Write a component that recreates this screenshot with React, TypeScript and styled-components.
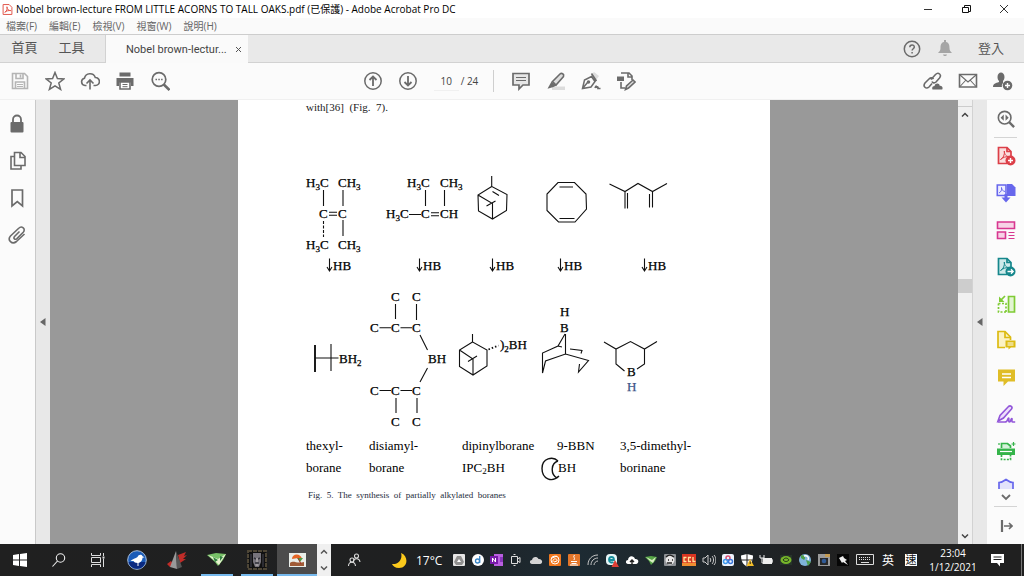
import React from 'react';
import styled, { createGlobalStyle } from 'styled-components';

const UI = `"Open Sans", "Noto Sans CJK TC", sans-serif`;
const SERIF = `"Liberation Serif", "Times New Roman", serif`;
const INK = '#6b6b6b';

const Global = createGlobalStyle`
  * { box-sizing: border-box; }
  body { margin: 0; font-family: ${UI}; }
  button, input { font: inherit; color: inherit; }
`;

/* ---------- window frame ---------- */

const Window = styled.div`
  display: flex;
  flex-direction: column;
  height: 100vh;
  overflow: hidden;
  background: #fafafa;
`;

const BareButton = styled.button`
  display: flex;
  align-items: center;
  justify-content: center;
  padding: 0;
  border: 0;
  background: transparent;
`;

const TitleBar = styled.header`
  display: flex;
  align-items: center;
  height: 18px;
  padding: 0 1px 0 2px;
  background: #fff;
`;

const Title = styled.h1`
  flex: 1;
  margin: 0 0 0 3px;
  font-size: 10px;
  font-weight: 400;
  line-height: 18px;
  color: #000;
  white-space: nowrap;
`;

const WindowButton = styled(BareButton)`
  width: 38px;
  height: 18px;
`;

const MenuBar = styled.nav`
  display: flex;
  gap: 12px;
  height: 16px;
  padding: 0 6px;
`;

const MenuButton = styled(BareButton)`
  height: 16px;
  font-size: 10px;
  line-height: 16px;
  color: #666;
`;

const TabBar = styled.div`
  display: flex;
  height: 29px;
  border-top: 1px solid #cdcdcd;
  background: #e9e9e9;
  box-shadow: inset 0 -1px 0 #d2d2d2;
`;

const NavTab = styled(BareButton)`
  width: 47px;
  font-size: 13px;
  color: #555;
`;

const NavTabs = styled.div`
  display: flex;
  width: 106px;
  padding-bottom: 5px;
  padding-left: 1px;
  border-right: 1px solid #d2d2d2;
`;

const FileTab = styled.div`
  display: flex;
  align-items: center;
  gap: 9px;
  padding: 0 7px 0 20px;
  background: #fafafa;
  font-family: Roboto, "Noto Sans CJK TC", sans-serif;
  font-size: 11px;
  color: #444;
  white-space: nowrap;
`;

const TabActions = styled.div`
  display: flex;
  align-items: center;
  margin-left: auto;
  padding-right: 20px;
  padding-bottom: 1px;
`;

const TabAction = styled(BareButton)`
  width: 33px;
  height: 27px;
`;

const SignIn = styled(BareButton)`
  height: 24px;
  margin-left: 16px;
  padding-bottom: 3px;
  font-size: 13px;
  color: #555;
`;

const Toolbar = styled.div`
  display: grid;
  grid-template-columns: 1fr auto 1fr;
  align-items: center;
  height: 37px;
  padding: 0 4px 0 2px;
  border-bottom: 1px solid #f0f0f0;
  background: #fbfbfb;
`;

const ToolGroup = styled.div<{ $end?: boolean; $mid?: boolean }>`
  display: flex;
  align-items: center;
  justify-content: ${(p) => (p.$end ? 'flex-end' : 'flex-start')};
  padding-right: ${(p) => (p.$mid ? '23px' : '0')};
`;

const ToolButton = styled(BareButton)`
  width: 35px;
  height: 34px;
`;

const PageField = styled.label`
  display: flex;
  align-items: center;
  padding: 0 15px 0 8px;
  font-size: 10px;
  color: #444;
  white-space: pre;
`;

const PageInput = styled.input`
  width: 25px;
  height: 20px;
  margin-right: 2px;
  padding: 0;
  border: 0;
  border-bottom: 1px solid #f0f0f0;
  background: transparent;
  text-align: center;
`;

const ToolDivider = styled.div`
  width: 1px;
  height: 22px;
  margin-right: 9px;
  background: #cfcfcf;
`;

/* ---------- work area ---------- */

const Work = styled.div`
  display: flex;
  flex: 1;
  min-height: 0;
`;

const LeftRail = styled.aside`
  width: 36px;
  padding-top: 5px;
  border-right: 1px solid #c9c9c9;
  background: #fbfbfb;
`;

const RailButton = styled(BareButton)`
  width: 34px;
  height: 37px;
`;

const Collapser = styled(BareButton)<{ $right?: boolean }>`
  width: ${(p) => (p.$right ? '15px' : '14px')};
  background: #e8e8e8;
  border-left: ${(p) => (p.$right ? '1px solid #d2d2d2' : '0')};
`;

const Canvas = styled.main`
  display: flex;
  flex: 1;
  justify-content: center;
  min-width: 0;
  overflow: hidden;
  background: #999;
`;

const Sheet = styled.article`
  flex: none;
  width: 532px;
  background: #fff;
  font-family: ${SERIF};
  color: #000;
`;

const BodyLine = styled.p`
  margin: 0 0 56px 68px;
  font-size: 11px;
  line-height: 14px;
  color: #222;
  white-space: pre;
`;

const Figure = styled.figure`
  margin: 0;

  > svg {
    display: block;
    width: 100%;
  }
`;

const Names = styled.div`
  display: grid;
  grid-template-columns: 63px 93px 95px 63px 1fr;
  margin-left: 68px;
  font-size: 13px;
  line-height: 22px;
  white-space: nowrap;
`;

const Name = styled.span`
  display: flex;
  height: 22px;

  svg {
    flex: none;
    margin-right: -2px;
    margin-left: -16px;
  }

  small {
    font-size: 9px;
    line-height: 28px;
  }
`;

const Caption = styled.figcaption`
  margin: 9px 0 0 70px;
  font-size: 9px;
  line-height: 14px;
  color: #222a3a;
  white-space: pre;
`;

const ScrollBar = styled.div`
  display: flex;
  flex-direction: column;
  align-items: center;
  width: 14px;
  padding-top: 6px;
  background: #f0f0f0;
`;

const ScrollButton = styled(BareButton)<{ $lined?: boolean }>`
  width: 14px;
  height: 16px;
  border-top: ${(p) => (p.$lined ? '1px solid #ccc' : '0')};
`;

const ScrollTrack = styled.div`
  display: grid;
  flex: 1;
  width: 14px;
  grid-template-rows: 157fr 14px 236fr;
`;

const ScrollThumb = styled.div`
  grid-row: 2;
  background: #cdcdcd;
`;

const RightRail = styled.aside`
  display: flex;
  flex-direction: column;
  align-items: center;
  width: 37px;
  background: #fbfbfb;
`;

const RailDivider = styled.div`
  width: 23px;
  height: 1px;
  flex: none;
  background: #d4d4d4;
`;

const ToolList = styled.div`
  display: flex;
  flex: 1;
  flex-direction: column;
  min-height: 0;
`;

const ToolSlot = styled(BareButton)`
  flex: 1;
  width: 37px;
  min-height: 0;
`;

const RailFoot = styled(BareButton)<{ $h: number; $low?: boolean }>`
  flex: none;
  align-items: ${(p) => (p.$low ? 'flex-end' : 'center')};
  width: 37px;
  height: ${(p) => p.$h}px;
`;

/* ---------- taskbar ---------- */

const TaskBar = styled.footer`
  display: flex;
  height: 32px;
  background: linear-gradient(90deg, #202020, #1f2021 40%, #1d2b33 56%, #1e262b 68%, #202020 82%);
  color: #fff;
`;

const TaskButton = styled(BareButton)<{ $app?: boolean; $active?: boolean }>`
  width: ${(p) => (p.$app ? '40px' : '39px')};
  height: 32px;
  flex: none;
  background: ${(p) => (p.$active ? '#4c4c4c' : 'transparent')};
  box-shadow: ${(p) => (p.$active ? 'inset 0 -2px 0 #76b9ed' : 'none')};
`;

const Running = styled.span`
  display: flex;
  align-items: center;
  justify-content: center;
  width: 32px;
  height: 32px;
  border-top: 2px solid transparent;
  border-bottom: 2px solid #76b9ed;
`;

const BandScroll = styled.div`
  display: flex;
  flex-direction: column;
  width: 14px;
  background: #f0f0f0;
`;

const BandButton = styled(BareButton)`
  flex: 1;
`;

const Weather = styled(BareButton)`
  justify-content: flex-start;
  gap: 9px;
  width: 72px;
  padding-left: 15px;
  font-size: 12px;
`;

const Tray = styled.div`
  display: flex;
  flex: 1;
  min-width: 0;
`;

const TrayButton = styled(BareButton)<{ $w?: number }>`
  flex: ${(p) => (p.$w ? 'none' : '1')};
  width: ${(p) => (p.$w ? `${p.$w}px` : 'auto')};
  min-width: 0;
  font-size: 12px;
`;

const InputMethod = styled.span`
  width: 12px;
  height: 12px;
  background: #fff;
  color: #111;
  font-size: 11px;
  line-height: 12px;
`;

const Clock = styled(BareButton)`
  flex-direction: column;
  width: 60px;
  font-size: 10px;
  line-height: 14px;
`;

const ShowDesktop = styled.div`
  width: 3px;
  margin-left: 10px;
  border-left: 1px solid #777;
`;

/* ---------- drawing helpers ---------- */

type IconProps = { s?: number; box?: number; w?: number; c?: string; children: React.ReactNode };
const Icon = ({ s = 20, box = 20, w = 2, c = INK, children }: IconProps) => (
  <svg width={s} height={s} viewBox={`0 0 ${box} ${box}`} fill="none" stroke={c} strokeWidth={w} aria-hidden="true">
    {children}
  </svg>
);

const Pdf = () => <path d="M4.500 13.500c3-1.500 4.300-5 3.800-8.500.2 4 2.200 5.500 5 5.700-3.500-.5-6.300.8-8.800 2.800z" strokeWidth="1" />;

const SideTriangle = () => (
  <svg width="6" height="8" viewBox="0 0 6 8" aria-hidden="true"><path d="M5.500 0v8L0 4z" fill="#666" /></svg>
);

const Chevron = ({ up, c = '#444' }: { up?: boolean; c?: string }) => (
  <svg width="8" height="8" viewBox="0 0 8 8" fill="none" stroke={c} strokeWidth="1.500" aria-hidden="true">
    <path d={up ? 'M1 5.500 4 2.500l3 3' : 'M1 2.500 4 5.500l3-3'} />
  </svg>
);

/* ---------- icon sets ---------- */

const fileTools: [string, React.ReactNode][] = [
  ['儲存', <Icon c="#b5b5b5" w={1.6}><path d="M2.500 2.500h12l3 3v12h-15z" /><path d="M6 2.500v5h7v-5M10.500 3.500v3M5.500 17.500v-6.500h9v6.500" /><path d="M7 13.500h6M7 15.500h6" strokeWidth="1" /></Icon>],
  ['加星號', <Icon w={1.5}><path d="m10 1.500 2.400 6.100 6.500.3-5.100 4.100 1.800 6.400L10 14.800l-5.600 3.600 1.800-6.400-5.100-4.100 6.500-.3z" /></Icon>],
  ['上傳', <Icon w={1.6}><path d="M6.500 14.500H5a3.700 3.700 0 0 1-.5-7.300 5.600 5.600 0 0 1 10.800-.7 4 4 0 0 1 .2 8h-2" /><path d="M10 18.500V9.500M6.500 12.500 10 9l3.500 3.500" /></Icon>],
  ['列印', <Icon><path d="M4.500 1.500h11v4h-11zM1.500 7h17v8h-2.500v-3.500h-12V15H1.500z" fill={INK} stroke="none" /><path d="M5 11h10v7H5z" strokeWidth="1.600" fill="#fff" /><path d="M7.500 13.500h5M7.500 15.700h5" strokeWidth="1" /></Icon>],
  ['搜尋', <Icon w={1.7}><circle cx="9" cy="8.500" r="6.800" /><path d="m13.800 13.500 5.700 5.500" strokeWidth="2.600" /><path d="M5.500 8.500H7M8.300 8.500h1.500M11.100 8.500h1.500" strokeWidth="1.500" /></Icon>],
];

const annotateTools: [string, React.ReactNode][] = [
  ['註解', <Icon w={1.7}><path d="M2 2.500h16v11.500h-6l-4 4v-4H2z" fill="#e6e6e6" /><path d="M5 6.500h10M5 9.500h10" strokeWidth="1.200" /></Icon>],
  ['螢光標示', <Icon w={1.6}><path d="M6 15.500h13v3.500H6z" fill="#dcdcdc" stroke="none" /><path d="M6.500 10.500 14 3c1.500-1.500 4.500 0 3.500 2.500L10 14z" fill="#ddd" /><path d="m5.500 10.500 5 4-3 1.500-6 1.800z" fill={INK} stroke="none" /></Icon>],
  ['簽署', <Icon w={1.5}><path d="m10 4 3-3 5 4-2.500 3.500z" fill="#ddd" stroke="none" /><path d="M1.500 17.500 3.500 9l7-3.500 3.500 5-4 5.500zM1.500 17.500l5-6M10.500 2.500l5 7.500M14 17c1-3 2-2 1.500 0 1-2 2-1 1.500.5h2.500" /><circle cx="7.500" cy="11" r="1" fill={INK} /></Icon>],
  ['轉換', <Icon w={1.6}><path d="M5 2h8l3 3v4M5 11v6h4M12 2v4h4" /><path d="M1 5.500h7v4.500H1z" fill={INK} stroke="none" /><path d="m9.500 18.500 1-3.500 6.500-6 2 2-6.500 6z" fill="#ddd" /></Icon>],
];

const shareTools: [string, React.ReactNode][] = [
  ['連結', <Icon w={1.6}><path d="m8 8.500 4.500-5c3-3 6.500.5 4 3.500l-3.500 4c-1.500 1.500-3.500 1-4-.5M10.500 8c-1-1.500-3-1.500-4.500 0l-4 4c-2.500 3.500 1 6.500 4 4L9 12.500" /><path d="M9.500 18.500c-1-2 .5-3.500 2-3.500 1-3.500 5-3 5.200-.2 2.500-.3 3.500 2 2.500 3.700z" fill={INK} stroke="none" /></Icon>],
  ['電子郵件', <Icon w={1.6}><path d="M1.500 3.500h17v12.500h-17z" /><path d="m2 4 8 7 8-7M2 15.500 7.500 9.500M18 15.500l-5.500-6" strokeWidth="1.100" /></Icon>],
  ['新增人員', <Icon><path d="M4.500 6c0-6 7-6 7 0 0 2-.8 3-1.500 4v2c-1 1-1.500 3-1 4H0c0-3 2.500-4 6-5v-1C5.200 9 4.500 8 4.500 6z" fill={INK} stroke="none" /><circle cx="14.500" cy="14.500" r="4.800" fill={INK} stroke="none" /><path d="M14.500 12v5M12 14.500h5" stroke="#fff" strokeWidth="1.400" /></Icon>],
];

const panels: [string, React.ReactNode][] = [
  ['安全性', <Icon w={1.8}><path d="M6 9V5.500a4 4 0 0 1 8 0V9" /><rect x="3.500" y="8" width="13" height="10.500" rx="1" fill={INK} stroke="none" /></Icon>],
  ['頁面縮圖', <Icon w={1.6}><path d="M7.500 1.500h6.500l4 4v9H7.500zM13 2v4.500h4.500M7.500 5.500H4v12.500h10v-3" /></Icon>],
  ['書籤', <Icon w={1.700}><path d="M5 2h10.500v16l-5.200-4.500L5 18z" /></Icon>],
  ['附件', <Icon w={1.6}><path d="m12.500 6.500-5 5c-1.500 2 .5 3.500 2.200 2.300l6.500-6.500c3-3.500-1.500-7-4.500-4L3.500 11c-3.500 4 1.500 9 6 5.500L17.500 9" /></Icon>],
];

const sideTools: [string, React.ReactNode][] = [
  ['建立 PDF', <Icon c="#dc3f48" w={1.7}><path d="M11 17.500H2.500V1.500H11l4 4v5" fill="#fbdede" /><path d="M11 1.500v4h4" /><Pdf /><circle cx="14.500" cy="14.500" r="5" fill="#dc3f48" stroke="none" /><path d="M14.500 12v5M12 14.500h5" stroke="#fff" strokeWidth="1.400" /></Icon>],
  ['合併檔案', <Icon c="#6767ec" w={1.600}><path d="M11 1h5l3.500 3.500V13H11z" fill="#6767ec" stroke="none" /><path d="M1.300 2H10v10.500H1.300z" fill="#eef" /><path d="M3 10c2-1 3-3 2.500-5.500C5.500 7 7 8 9 8.500" strokeWidth="1" /><path d="M10 11v5" strokeWidth="3" /><path d="M5.500 14.500h9L10 19.500z" fill="#6767ec" stroke="none" /></Icon>],
  ['組織頁面', <Icon c="#d83790" w={1.600}><path d="M1.500 2h17v6.500h-17zM1.500 12h8v6.500h-8z" fill="#f7d3e6" /><path d="M12.500 12.500h6M12.500 15.500h6M12.500 18.500h6" strokeWidth="1" /></Icon>],
  ['轉存 PDF', <Icon c="#16878c" w={1.7}><path d="M11 17.500H2.500V1.500H11l4 4v5" fill="#cdeaea" /><path d="M11 1.500v4h4" /><Pdf /><circle cx="14.500" cy="14.500" r="5" fill="#16878c" stroke="none" /><path d="M11.500 14.500h5.500M15 12.300l2.200 2.200-2.200 2.200" stroke="#fff" strokeWidth="1.300" /></Icon>],
  ['裁切頁面', <Icon c="#7fcb35" w={1.700}><path d="M12.500 2.500h6v15.500h-6z" fill="#e3f5d3" /><path d="M2.500 9.500V18H10M2.500 9.500H10V18" strokeDasharray="2 1.500" /><path d="M9 2 4.500 6.500" /><path d="M3 2.500v5.500h5.500z" fill="#7fcb35" stroke="none" /></Icon>],
  ['註解檔案', <Icon c="#dcbb12" w={1.700}><path d="M9 17.500H2V1.500h7l5.500 5.500v3" fill="#fbf2c4" /><path d="M9 1.500v6h5.500" /><path d="M9.500 10.500h10v7H15l-2.500 2v-2h-3z" fill="#dcbb12" stroke="none" /><path d="M11.500 13h6M11.500 15h6" stroke="#fff" strokeWidth="1" /></Icon>],
  ['註解', <Icon><path d="M2 2.500h17v12h-7l-4.500 4.500v-4.500H2z" fill="#e0bd27" stroke="none" /><path d="M6 7h9M6 10.500h9" stroke="#fff" strokeWidth="1.300" /></Icon>],
  ['填寫和簽署', <Icon c="#9256d9" w={1.600}><path d="M2 17 4 11.500 12.500 2.500c2-1.500 4.500.5 3 2.500L7.500 14z" fill="#eee0fb" /><path d="M1.500 18h7.500c3 0 2.500-4 3.500-4s-.5 4 1 4 1.200-3.500 2.200-3.500-.7 3.500 1 3.500h2.500" /></Icon>],
  ['掃描', <Icon c="#35b44a" w={1.700}><path d="M5.500 7V2.500h6L14.500 5v2" fill="#d5f2da" /><path d="M1 7.500h18v6.500H1z" fill="#35b44a" stroke="none" /><path d="M4 10.500h12" stroke="#fff" strokeWidth="1.200" /><path d="M5.500 14v4.500h9V14" strokeDasharray="2 1.300" fill="#fff" /><path d="M17.500 1v4M15.500 3h4M3 2v2" strokeWidth="1.200" /></Icon>],
];

const trayIcons: [string, React.ReactNode][] = [
  ['Drive', <><rect x="1" y="1" width="12" height="12" rx="1" fill="#e6e6e6" /><path d="M5 3h4l3 6-2 3H4L2 9z" fill="#909090" /><path d="m7 6 2 3H5z" fill="#fff" /></>],
  ['d', <><circle cx="7" cy="7" r="6" fill="#fff" /><circle cx="6.500" cy="8" r="2" fill="none" stroke="#3986c6" strokeWidth="1.300" /><path d="M8.700 3v7" stroke="#3986c6" strokeWidth="1.300" /></>],
  ['OneNote', <><path d="M4 1h9v12H4z" fill="#b95fe0" /><path d="M10 4h3v5h-3z" fill="#8a35bc" /><path d="M0 3h8v8H0z" fill="#7719aa" /><path d="M2.500 9V5l3 4V5" stroke="#fff" fill="none" /></>],
  ['Meet', <path d="M2.500 3.500h6v7h-6zM8.500 6l2.500-1.500v5L8.500 8M4.500 1.500h2M4.500 12.500h2" fill="none" stroke="#ddd" />],
  ['OneDrive', <path d="M3 11C0 10.500.5 7 3 7c.5-3.500 5-4 6.500-1 4-.5 5 4.500 1.500 5z" fill="#d4d4d4" />],
  ['Avast', <><rect x="1" y="1" width="12" height="12" rx="1" fill="#f0781e" /><circle cx="7" cy="7" r="4" fill="none" stroke="#fff" /><path d="M5 9c-1-4 5-4 4-1l-3 1M4 5l5-2" fill="none" stroke="#fff" /></>],
  ['Java', <><rect x="1" y="1" width="12" height="12" rx="1" fill="#e2762a" /><path d="M7.500 2c-2 2 1 2.500-.5 5M4 8.500h6M4.500 10.500h5M3 12h8" fill="none" stroke="#fff" /></>],
  ['Wi-Fi', <path d="M2 12C2 6 6 2 12 2M5 12c0-4 3-7 7-7M8 12c0-2 2-4 4-4" fill="none" stroke="#c7c7c7" />],
  ['ESET', <><rect x="1" y="1" width="11" height="11" rx="4" fill="#e8f6f7" /><path d="M4 7h5c0-4-5-4-5 0 0 2.500 3 3 4.500 2" fill="none" stroke="#168e9c" strokeWidth="1.800" /><path d="m10 7 4 7H6.500z" fill="#df3f36" /></>],
  ['Backup', <><path d="M3 11C0 10.500.5 7 3 7c.5-5 6-4.500 7-1 4-.5 4.500 4.500 1 5z" fill="#fff" /><path d="M7 12V7M5 9l2-2 2 2" stroke="#222" fill="none" strokeWidth="1.400" /></>],
  ['Eagle', <><path d="m1 4 6-1 6 1-2 4-4 4-2-4z" fill="#56a546" /><path d="m2 4 6 3 4-3-3 6-3-2z" fill="#d9ecc2" /></>],
  ['Panda', <><rect x="1" y="1" width="12" height="12" rx="1" fill="#8e9296" /><circle cx="7" cy="7" r="4.500" fill="#e5e5e5" /><path d="M3 4c3-3 5-2 8 0M5 7h1M9 7h1M4 10h5" stroke="#222" fill="none" strokeWidth="1.400" /></>],
  ['CCL', <><rect x="0" y="1" width="14" height="12" fill="#d93521" /><path d="M0 10h14v3H0z" fill="#ef8d30" /><path d="M4.500 4.500H2v4h2.500M9 4.500H6.500v4H9M11 4v4.500h2.500" stroke="#ffe59a" fill="none" strokeWidth="1.300" /></>],
  ['音量', <path d="M1 5h2l3-3v10L3 9H1zM8 5c1 1 1 3 0 4M10 3c2 2 2 6 0 8M12 2c2.500 3 2.500 7 0 10" fill="none" stroke="#ccc" />],
  ['雲端', <><rect x="1" y="1" width="12" height="12" rx="2" fill="#eef4fd" /><circle cx="7" cy="5" r="2" fill="none" stroke="#dc5276" strokeWidth="1.500" /><circle cx="4.500" cy="8.500" r="2" fill="none" stroke="#3b98ec" strokeWidth="1.500" /><circle cx="9.500" cy="8.500" r="2" fill="none" stroke="#3b78dc" strokeWidth="1.500" /></>],
  ['安全性', <><path d="M1 2.500 7 1l6 1.500c0 6-2 9-6 11-4-2-6-5-6-11z" fill="#fff" /><path d="M7 1v12M1 7h12" stroke="#222" /><path d="m10 6 4 7H6.500z" fill="#f4be29" /><path d="M10.200 8.500v2.500" stroke="#222" /></>],
  ['電池', <><path d="M4 5h9v6H4z" fill="#eee" /><path d="M13 7h1v2h-1M1 2v3h4V2M3 5v5h3" stroke="#eee" fill="none" /></>],
  ['NVIDIA', <><rect x="1" y="2" width="12" height="10" fill="#26332a" /><ellipse cx="7" cy="7" rx="5.500" ry="4" fill="#76b52a" /><path d="M4 7c2-3 5-2 6 0-2 2-4 2-6 0" stroke="#1f301a" fill="none" /></>],
  ['Globe', <><circle cx="7" cy="7" r="6" fill="#7fb3d9" /><path d="M3 2c4 0 5 3 3 5L3 5zM8 7l5 2-3 4z" fill="#4d9d4b" /><path d="M6 3c4-1 5 2 4 4" stroke="#fff" strokeWidth="1.500" fill="none" /></>],
  ['Capture', <><rect x="1" y="1" width="12" height="12" fill="#9a9a9a" /><path d="M3 5h8v7H3z" fill="#282828" /><circle cx="7" cy="8" r="2.300" fill="#305b97" /><path d="M8 1h5v3H8z" fill="#c49b52" /></>],
  ['Pin', <><rect x="1" y="1" width="12" height="12" fill="#060606" /><path d="m3 5 4-2 1 2 3 2-2 1 3 4-5-3-1 1z" fill="#eee" /></>],
];

/* ---------- reaction scheme ---------- */

type Label = [string, number, number, string?];

const labels: Label[] = [
  ['H3C', 306, 187], ['CH3', 338, 187], ['C', 319, 218], ['C', 338, 218], ['H3C', 306, 249], ['CH3', 338, 249],
  ['H3C', 407, 187], ['CH3', 440, 187], ['H3C', 386, 218], ['C', 421, 218], ['CH', 440, 218],
  ['C', 391, 301], ['C', 412, 301], ['C', 370, 332], ['C', 391, 332], ['C', 412, 332],
  ['BH', 428, 363], ['C', 370, 395], ['C', 391, 395], ['C', 412, 395], ['C', 391, 426], ['C', 412, 426],
  ['BH2', 339, 363], [')2BH', 500, 349], ['H', 560, 316], ['B', 560, 332], ['B', 627, 376], ['H', 627, 391, '#3c5488'],
];

const hydroborations = [329, 419, 492, 560, 644];

const bonds = [
  'M323.500 190v16M343 190v16M329 212.300h8M329 215.300h8M343 220v16',
  'M425.500 190v16M444.500 190v16M409 214.500h12M431 212.700h8M431 215.700h8',
  'M491.700 176v10.500L507 194.500 506.500 210.500 492.500 219 478.500 211 478 195 491.700 186.500M492.500 191.500l6.500 4M478 195l14.500 8.500V219M486.500 206l9-5',
  'M558 182.500h16.500L586 194l.5 15L575 222h-16.500L547 210.500V194zM559.500 187H573M559.500 218.500h15',
  'M609.500 184 625 191.500 638 183.500 652.500 191.500 667 183.500M625 191.500v17M627.500 193v15.500M652.500 191.500v16M649.500 194v13.500',
  'M395.500 304v15M416.500 304v16M379.500 327.700H391M400.500 327.700H412M420 335l7.500 15M427.500 368 420 382M379.500 390.500H391M400.500 390.500H412M396 398v15M417 398v15',
  'M331 344v27M315 358h23.500',
  'M472.500 334v8L487 350v16l-14 9-13.500-8.500V350l13-8M459.500 350l13.500 9v16M468 361.500l9-5.500',
  'M565 334 558 346 542.500 353V373L545.500 361 565.500 354 588.500 360.500 578.500 372 579.500 364M565.500 334v20M558 346l4 1M570 349l12 1.500-1 3',
  'M604 342l12 7 14.500-7.500 14 7.500 12.500-7.500M616 349v15l8.500 7M644.500 349v15l-7.500 5',
];

const Formula = ({ label: [text, x, y, color = '#000'] }: { label: Label }) => {
  let lowered = false;
  return (
    <text x={x} y={y} fill={color} stroke={color}>
      {text.split(/(\d)/).filter(Boolean).map((part, i) => {
        const sub = /\d/.test(part);
        const dy = sub ? 3 : lowered ? -3 : 0;
        lowered = sub;
        return <tspan key={i} dy={dy} fontSize={sub ? 9 : 13}>{part}</tspan>;
      })}
    </text>
  );
};

const Scheme = () => (
  <svg viewBox="238 170 532 265" fontFamily={SERIF} fontSize="13" role="img" aria-label="Hydroboration of alkenes">
    <g fill="none" stroke="#111" strokeWidth="1.100">
      {bonds.map((d) => <path key={d} d={d} />)}
      <path d="M323.500 221v16" strokeDasharray="3 1.500" />
      <path d="M315 345v27" strokeWidth="1.900" />
      <path d="M488.500 349.500l10-4" strokeDasharray="1.500 2" strokeWidth="1.800" />
      {hydroborations.map((x) => <path key={x} d={`M${x + 0.5} 258.500v12M${x - 2} 267l2.500 4 2.500-4`} />)}
    </g>
    <g strokeWidth=".25">
      {labels.map((l, i) => <Formula key={i} label={l} />)}
      {hydroborations.map((x) => <Formula key={x} label={['HB', x + 4, 270]} />)}
    </g>
  </svg>
);

/* ---------- page ---------- */

const Tools = ({ items }: { items: [string, React.ReactNode][] }) => (
  <>{items.map(([name, icon]) => <ToolButton key={name} aria-label={name}>{icon}</ToolButton>)}</>
);

export default function App() {
  return (
    <Window>
      <Global />
      <TitleBar>
        <Icon s={11} box={20} c="#e2574c" w={1.800}><path d="M2 1h11l5 5v13H2z" /><path d="M5 15c4-2 5-6 4-10 0 5 3 7 7 7-4-.5-8 .5-11 3z" /></Icon>
        <Title>Nobel brown-lecture FROM LITTLE ACORNS TO TALL OAKS.pdf (已保護) - Adobe Acrobat Pro DC</Title>
        <WindowButton aria-label="最小化"><Icon s={10} box={10} w={1} c="#333"><path d="M1 5.500h8" /></Icon></WindowButton>
        <WindowButton aria-label="還原"><Icon s={10} box={10} w={1} c="#111"><path d="M1.500 3.500h6v5h-6zM3.500 3V1.500h6v6H8" /></Icon></WindowButton>
        <WindowButton aria-label="關閉"><Icon s={10} box={10} w={1} c="#333"><path d="m1 1 8 8M9 1 1 9" /></Icon></WindowButton>
      </TitleBar>
      <MenuBar>
        {['檔案(F)', '編輯(E)', '檢視(V)', '視窗(W)', '說明(H)'].map((m) => <MenuButton key={m}>{m}</MenuButton>)}
      </MenuBar>
      <TabBar>
        <NavTabs><NavTab>首頁</NavTab><NavTab>工具</NavTab></NavTabs>
        <FileTab>
          <span>Nobel brown-lectur...</span>
          <BareButton aria-label="關閉標籤"><Icon s={5} box={5} w={1} c="#555"><path d="m0 0 5 5M5 0 0 5" /></Icon></BareButton>
        </FileTab>
        <TabActions>
          <TabAction aria-label="說明"><Icon s={18} box={18} w={1.500}><circle cx="9" cy="9" r="7.700" /><path d="M6.800 7.300c0-3.200 4.700-3 4.500-.2-.1 1.600-2.200 1.700-2.200 3.400M9.100 12v1.600" /></Icon></TabAction>
          <TabAction aria-label="通知"><svg width="14" height="17" viewBox="0 0 14 17" aria-hidden="true"><path d="M6 0h2v2c3 .7 3.500 3 3.500 6 0 2 .8 3.500 2.500 5H0c1.700-1.500 2.500-3 2.500-5 0-3 .5-5.300 3.500-6zM5 14.500h4c-.5 2-3.500 2-4 0z" fill="#a5a5a5" /></svg></TabAction>
          <SignIn>登入</SignIn>
        </TabActions>
      </TabBar>
      <Toolbar>
        <ToolGroup><Tools items={fileTools} /></ToolGroup>
        <ToolGroup $mid>
          <ToolButton aria-label="上一頁"><Icon w={1.500}><circle cx="10" cy="10" r="8.200" /><path d="M10 15V6M6.500 9 10 5.500 13.500 9" strokeWidth="1.800" /></Icon></ToolButton>
          <ToolButton aria-label="下一頁"><Icon w={1.500}><circle cx="10" cy="10" r="8.200" /><path d="M10 5v9M6.500 11l3.500 3.500 3.500-3.500" strokeWidth="1.800" /></Icon></ToolButton>
          <PageField><PageInput defaultValue="10" aria-label="頁碼" />/ 24</PageField>
          <ToolDivider />
          <Tools items={annotateTools} />
        </ToolGroup>
        <ToolGroup $end><Tools items={shareTools} /></ToolGroup>
      </Toolbar>

      <Work>
        <LeftRail>
          {panels.map(([name, icon]) => <RailButton key={name} aria-label={name}>{icon}</RailButton>)}
        </LeftRail>
        <Collapser aria-label="展開導覽窗格"><SideTriangle /></Collapser>
        <Canvas>
          <Sheet>
            <BodyLine>{'with[36]  (Fig.  7).'}</BodyLine>
            <Figure>
              <Scheme />
              <Names>
                <Name>thexyl-</Name><Name>disiamyl-</Name><Name>dipinylborane</Name><Name>9-BBN</Name><Name>3,5-dimethyl-</Name>
                <Name>borane</Name><Name>borane</Name><Name>IPC<small>2</small>BH</Name>
                <Name>
                  <svg width="19" height="24" viewBox="0 0 19 24" fill="none" stroke="#111" strokeWidth="1.400" aria-hidden="true">
                    <path d="M17 4C12-1 1 1 1 11.500S11 26 18 19M17 4c-7 2-8 13-1 17" />
                  </svg>
                  BH
                </Name>
                <Name>borinane</Name>
              </Names>
              <Caption>{'Fig.  5.  The  synthesis  of  partially  alkylated  boranes'}</Caption>
            </Figure>
          </Sheet>
        </Canvas>
        <ScrollBar>
          <ScrollButton $lined aria-label="向上捲動"><Chevron up /></ScrollButton>
          <ScrollTrack><ScrollThumb /></ScrollTrack>
          <ScrollButton aria-label="向下捲動"><Chevron /></ScrollButton>
        </ScrollBar>
        <Collapser $right aria-label="收合工具窗格"><SideTriangle /></Collapser>
        <RightRail>
          <RailFoot $h={37} aria-label="搜尋工具"><Icon s={18} w={1.800}><circle cx="8.500" cy="8.500" r="7" /><path d="m13.500 13.500 5.500 5.500" strokeWidth="2.600" /><path d="M7.500 5v7L4 8.500zM9.500 5v7L13 8.500z" fill={INK} stroke="none" /></Icon></RailFoot>
          <RailDivider />
          <ToolList>
            {sideTools.map(([name, icon]) => <ToolSlot key={name} aria-label={name}>{icon}</ToolSlot>)}
          </ToolList>
          <RailFoot $h={20} $low aria-label="保護">
            <svg width="16" height="11" viewBox="0 0 16 11" aria-hidden="true"><path d="M1 11V4.500c3 0 5-1.500 7-3 2 1.500 4 3 7 3V11" fill="#e3e3fb" stroke="#6767ec" strokeWidth="1.700" /></svg>
          </RailFoot>
          <RailFoot $h={17} aria-label="更多工具"><Icon s={12} box={12} w={1.800}><path d="m2 3 4 4 4-4" /></Icon></RailFoot>
          <RailDivider />
          <RailFoot $h={37} aria-label="顯示窗格"><Icon s={14} box={14} w={1.600}><path d="M3 1v12" strokeWidth="2.200" /><path d="M5 7h8M10 4l3 3-3 3" /></Icon></RailFoot>
        </RightRail>
      </Work>

      <TaskBar>
        <TaskButton aria-label="開始"><svg width="14" height="14" viewBox="0 0 14 14" aria-hidden="true"><path d="m0 2 6-1v5.500H0zM7 1l7-1v6.500H7zM0 7.500h6V13l-6-1zM7 7.500h7V14l-7-1z" fill="#fff" /></svg></TaskButton>
        <TaskButton aria-label="搜尋"><Icon s={14} box={14} w={1.100} c="#eee"><circle cx="8.500" cy="5" r="4.200" /><path d="m5.500 8-5 5.500" /></Icon></TaskButton>
        <TaskButton aria-label="工作檢視"><Icon s={14} box={14} w={1} c="#ddd"><path d="M.500 0v2.500h9V0M.500 4.500h9v5h-9zM.500 14v-2.500h9V14M12.500 0v3M12.500 5.500V14" /><path d="M11.500 4.500h2" strokeWidth="2" /></Icon></TaskButton>
        <TaskButton $app aria-label="Bird">
          <svg width="20" height="20" viewBox="0 0 20 20" aria-hidden="true"><circle cx="10" cy="10" r="9.300" fill="#1b5cb8" stroke="#a9bfdd" /><path d="M1.500 12a8.700 8.700 0 0 0 17 0z" fill="#0b2a80" /><path d="M3.500 11c2-2 5-2.500 7-4 1-2.500 4-3 5-.7l2 1-2 .5c0 3-2.500 5-4 5.200v3h-1v-3c-2 0-3.500-1-4-2z" fill="#fff" /></svg>
        </TaskButton>
        <TaskButton $app aria-label="Pyramid">
          <svg width="20" height="20" viewBox="0 0 20 20" aria-hidden="true"><path d="m11 5 8-3-2 4 3-1-4 4 3 0-6 4zM4 11l-4 3 3 3 4-2z" fill="#c02c28" /><path d="M9 1 3 17l7 2z" fill="#999" /><path d="m9 1 6 16-5 2z" fill="#555" /></svg>
        </TaskButton>
        <TaskButton $app aria-label="Eagle"><Running>
          <svg width="20" height="16" viewBox="0 0 20 16" aria-hidden="true"><path d="m0 3 9-2 10 1-3 6-5 6-3-4z" fill="#78c168" /><path d="m1 3 10 4 8-5-7 11-3-3z" fill="#e6f2ce" /><path d="m6 5 5 3-3 2zM13 4l3 1-3 4z" fill="#2f8040" /></svg>
        </Running></TaskButton>
        <TaskButton $app aria-label="Game"><Running>
          <svg width="20" height="20" viewBox="0 0 20 20" aria-hidden="true"><path d="M1 1h18v18H1z" fill="#111" stroke="#4e4636" strokeWidth="2" strokeDasharray="4 1" /><path d="M6 3h8v9l-2 5H8l-2-5z" fill="#77747c" /><path d="M4 4v13M16 4v13M7 8l2 1M13 8l-2 1M8 13h4" stroke="#33333b" strokeWidth="1.600" fill="none" /><path d="M10 8v4M8.500 15h3" stroke="#c7bfc0" /></svg>
        </Running></TaskButton>
        <TaskButton $app $active aria-label="Pictures">
          <svg width="17" height="14" viewBox="0 0 17 14" aria-hidden="true"><path d="M0 0h17v14H0z" fill="#e9eee9" /><path d="M3 6c0-6 9-6 10 0l-4-1z" fill="#e56524" /><path d="M8 5h6l-3 4z" fill="#4f9c43" /><path d="M1 10c4-3 6 1 14-1v4H1z" fill="#a05b36" /><path d="m9 5 3 6" stroke="#a63526" /></svg>
        </TaskButton>
        <BandScroll>
          <BandButton aria-label="上移"><Chevron up c="#555" /></BandButton>
          <BandButton aria-label="下移"><Chevron c="#555" /></BandButton>
        </BandScroll>
        <TrayButton $w={46} aria-label="人員"><Icon s={14} box={14} w={1.100} c="#ddd"><circle cx="9.500" cy="3" r="2" /><path d="M6.500 8c0-3 6-3.500 6.500 1" /><circle cx="5" cy="7" r="2" /><path d="M1.500 13c0-5 6.500-5 7 0" /></Icon></TrayButton>
        <Weather>
          <svg width="15" height="15" viewBox="0 0 15 15" aria-hidden="true"><path d="M9 0c8 3 7 15-2 15-4 0-6-2-7-4 6 1 11-5 9-11z" fill="#fbc91c" /></svg>
          <span>17°C</span>
        </Weather>
        <Tray>
          {trayIcons.map(([name, art]) => (
            <TrayButton key={name} aria-label={name}><svg width="14" height="14" viewBox="0 0 14 14" aria-hidden="true">{art}</svg></TrayButton>
          ))}
        </Tray>
        <TrayButton $w={24} aria-label="鍵盤"><svg width="18" height="12" viewBox="0 0 18 12" fill="none" stroke="#ddd" aria-hidden="true"><path d="M.500.500h17v10H.500z" /><path d="M3 3.500h12M3 5.500h12" strokeDasharray="1 1" /><path d="M5 8.500h8" /></svg></TrayButton>
        <TrayButton $w={22}>英</TrayButton>
        <TrayButton $w={24}><InputMethod>速</InputMethod></TrayButton>
        <Clock><span>23:04</span><span>1/12/2021</span></Clock>
        <TrayButton $w={28} aria-label="通知中心"><svg width="13" height="14" viewBox="0 0 13 14" aria-hidden="true"><path d="M0 1h13v9H9v3.500L6 10H0z" fill="#fff" /><path d="M2.500 4h8M2.500 6.500h8" stroke="#222" /></svg></TrayButton>
        <ShowDesktop />
      </TaskBar>
    </Window>
  );
}
